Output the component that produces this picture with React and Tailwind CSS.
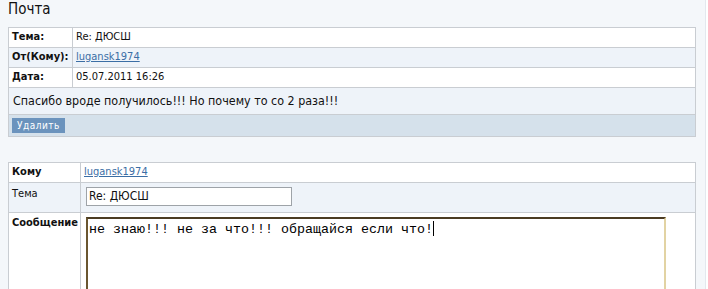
import React from "react";

const Row = ({ label, bold = true, bg = "bg-white", children, h = "h-[19px]", top = false, cols = "grid-cols-[64px_1fr]" }) => (
    <div className={`grid ${cols} ${bg} border-b border-[#c9cdd2] last:border-b-0`}>
        <div className={`${h} border-r border-[#c9cdd2] px-[3px] text-[11px] ${bold ? "font-bold" : ""} ${top ? "pt-[2px]" : "flex items-center"}`}>
            {label}
        </div>
        <div className={`${h} px-[3px] text-[11px] ${top ? "pt-[4px]" : "flex items-center"}`}>{children}</div>
    </div>
);

const App = () => {
    return (
        <div className="w-[708px] h-[289px] overflow-hidden bg-[#f4f7fa] flex" style={{ fontFamily: "'DejaVu Sans Condensed', 'DejaVu Sans', Tahoma, sans-serif" }}>
            <div className="flex-1 pl-[8px] pr-[9px]">
                <h1 className="text-[15px] leading-[17px] pt-[1px] text-[#111]">Почта</h1>

                {/* message view */}
                <div className="mt-[9px] border border-[#c9cdd2] text-[#111]">
                    <Row label="Тема:">Re: ДЮСШ</Row>
                    <Row label="От(Кому):" bg="bg-[#eef3f9]">
                        <a href="#" className="text-[#3b6ea5] underline">lugansk1974</a>
                    </Row>
                    <Row label="Дата:">05.07.2011 16:26</Row>
                    <div className="h-[27px] bg-[#eef3f9] border-b border-[#c9cdd2] flex items-center px-[4px] text-[12.4px]">
                        Спасибо вроде получилось!!! Но почему то со 2 раза!!!
                    </div>
                    <div className="h-[21px] bg-[#d5e1eb] flex items-center px-[3px]">
                        <button className="h-[15px] px-[5px] bg-[#6b93bd] text-white text-[10px] leading-[15px] tracking-[0.5px]">
                            Удалить
                        </button>
                    </div>
                </div>

                {/* reply form */}
                <div className="mt-[25px] border border-b-0 border-[#c9cdd2] text-[#111]">
                    <Row label="Кому" cols="grid-cols-[72px_1fr]">
                        <a href="#" className="text-[#3b6ea5] underline">lugansk1974</a>
                    </Row>
                    <div className="grid grid-cols-[72px_1fr] bg-[#eef3f9] border-b border-[#c9cdd2]">
                        <div className="h-[29px] border-r border-[#c9cdd2] px-[3px] pt-[3px] text-[11px]">Тема</div>
                        <div className="h-[29px] pl-[5px] pt-[4px]">
                            <div className="w-[206px] h-[19px] bg-white border border-[#9ea3a8] px-[2px] text-[12px] leading-[17px]">Re: ДЮСШ</div>
                        </div>
                    </div>
                    <div className="grid grid-cols-[72px_1fr] bg-white">
                        <div className="h-[80px] border-r border-[#c9cdd2] px-[3px] pt-[2px] text-[11px] font-bold">Сообщение</div>
                        <div className="h-[80px] pl-[5px] pt-[4px]">
                            <div className="w-[580px] h-[80px] bg-white border-2 border-t-[#4b3b22] border-l-[#6a5630] border-r-[#e2d3a3] border-b-[#e2d3a3] px-[1px] pt-[2px] text-[13.33px] leading-[16px] text-black" style={{ fontFamily: "'Liberation Mono', 'Courier New', monospace" }}>
                                не знаю!!! не за что!!! обращайся если что!<span className="inline-block w-[1px] h-[15px] bg-black align-[-3px]"></span>
                            </div>
                        </div>
                    </div>
                </div>
            </div>
            <div className="w-[3px] border-l border-[#e3e8ee] bg-white"></div>
        </div>
    );
};

export default App;
